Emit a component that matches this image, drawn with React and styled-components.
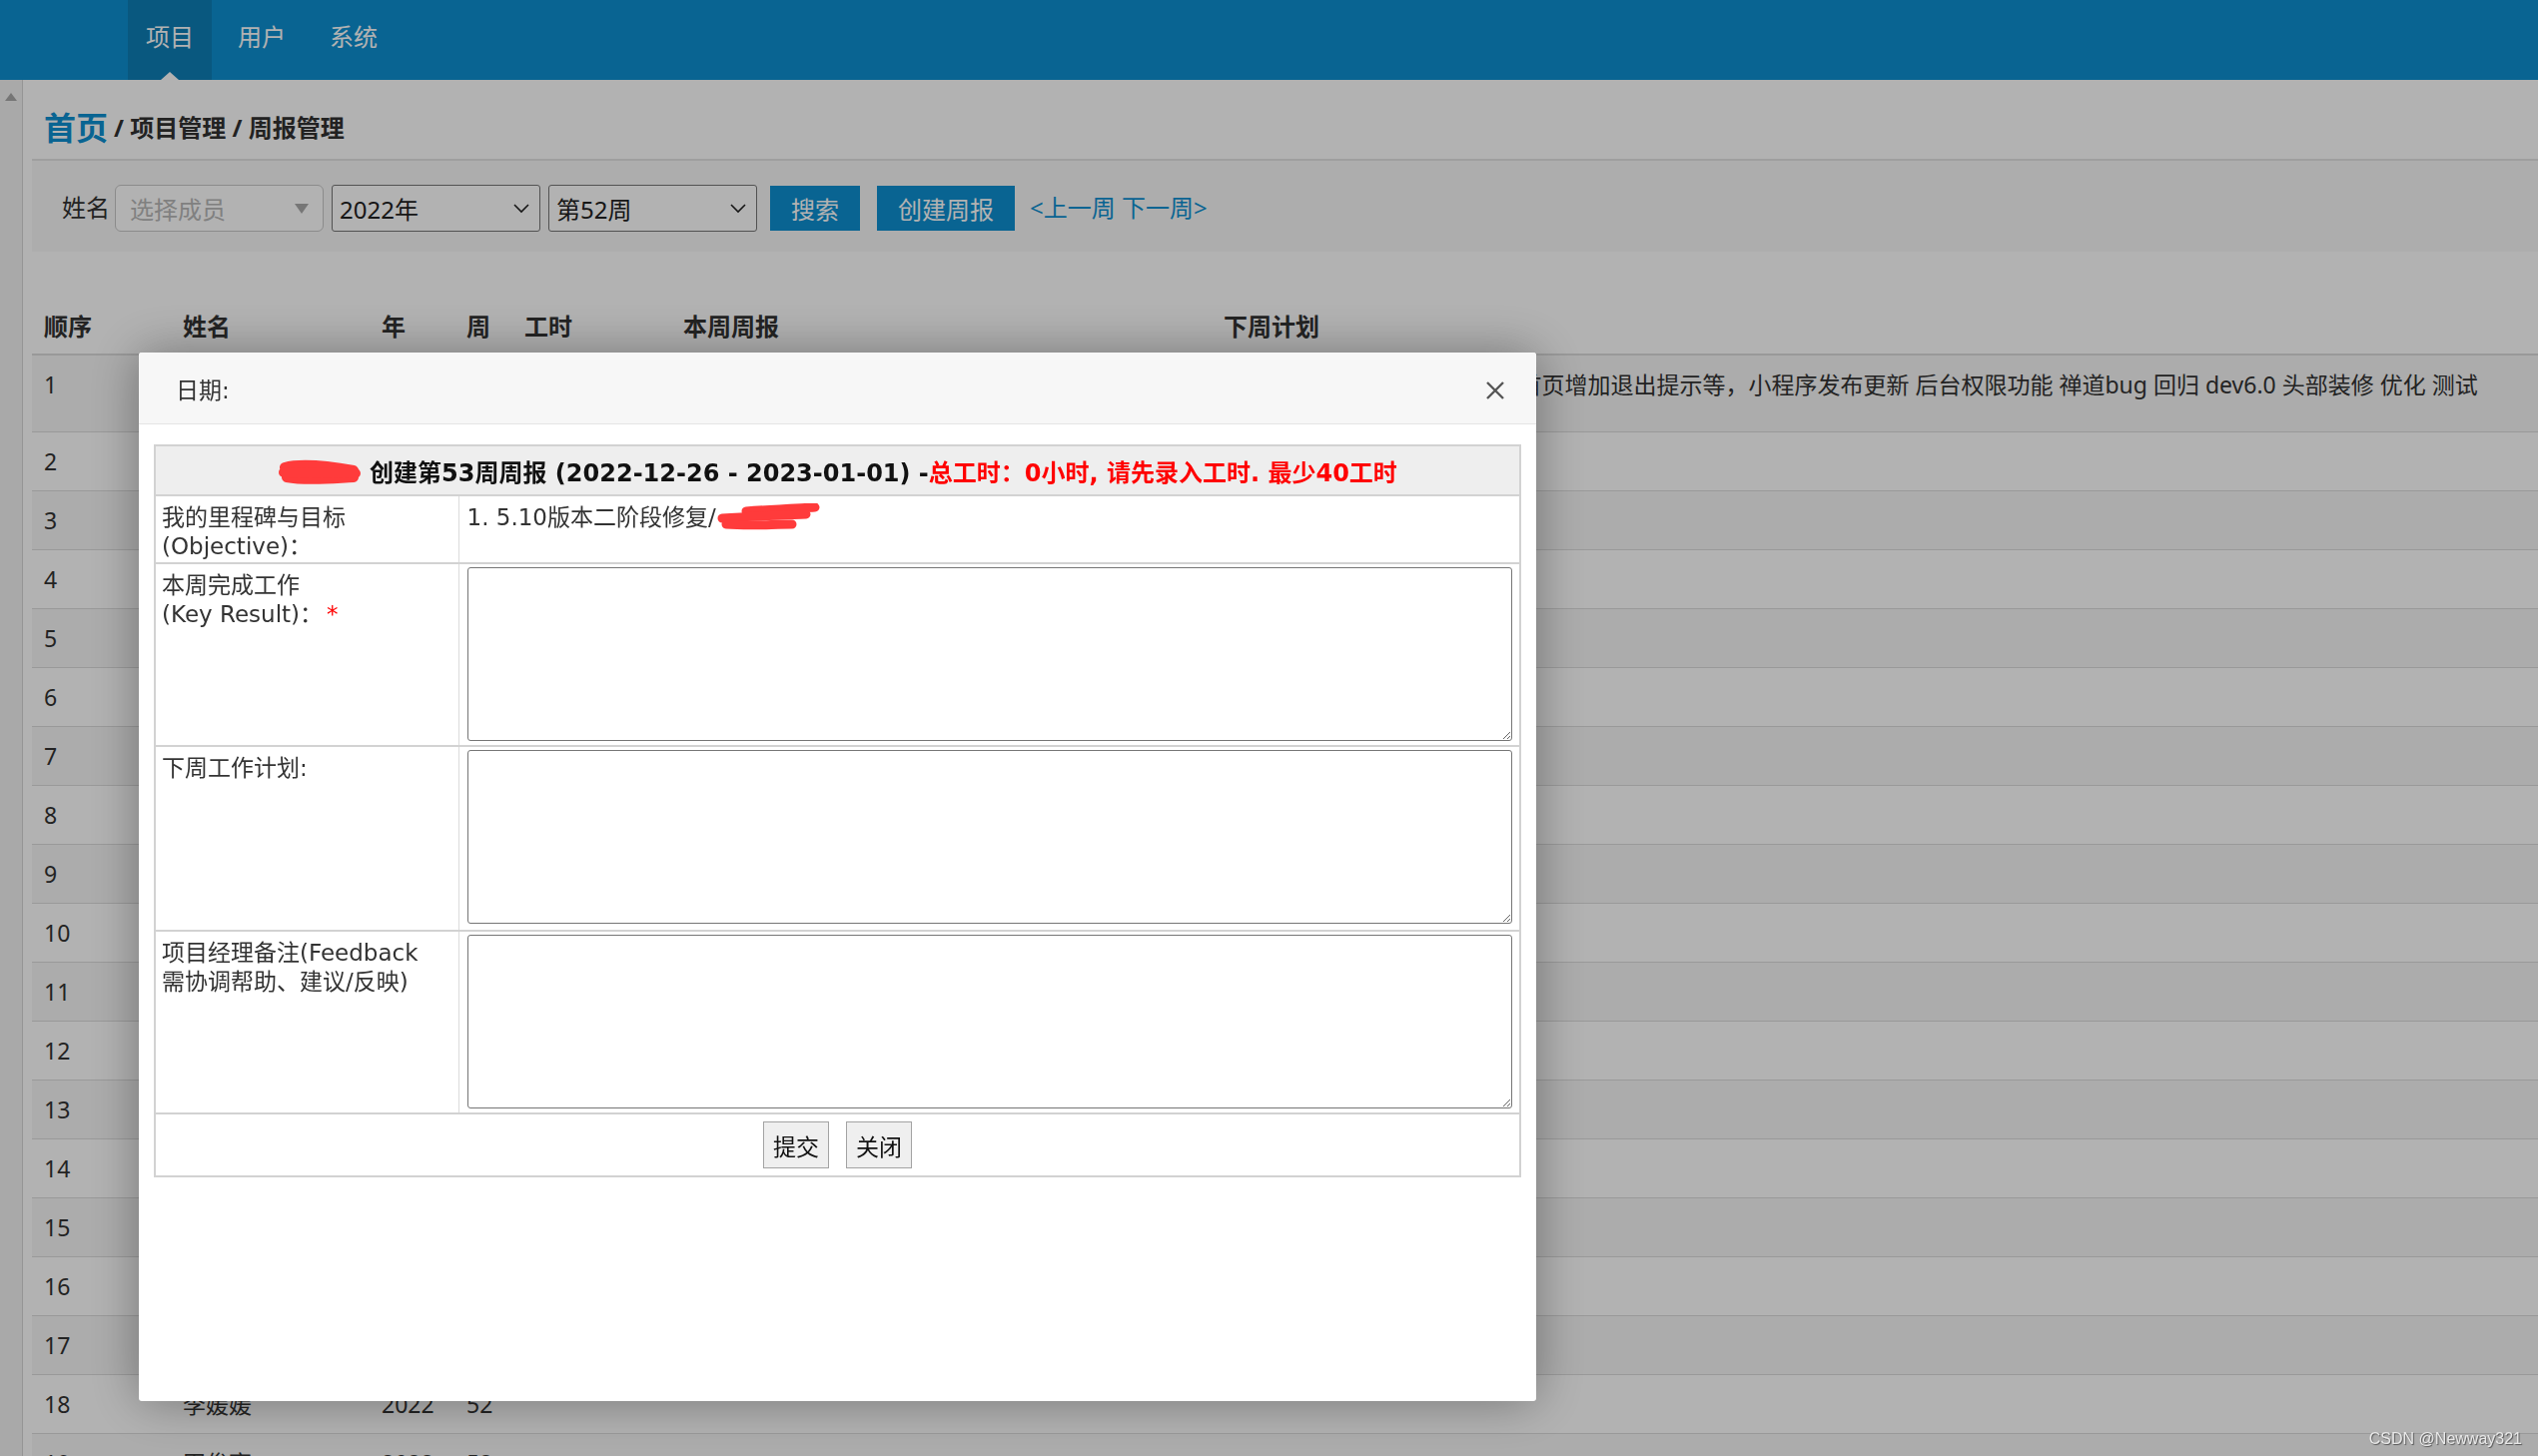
import React from "react";
import styled, { createGlobalStyle } from "styled-components";

const GlobalStyle = createGlobalStyle`
  html, body { margin: 0; padding: 0; height: 100%; }
  body {
    font-family: "Noto Sans", "Noto Sans CJK SC", sans-serif;
    color: #333;
    background: #fff;
    overflow: hidden;
  }
  * { box-sizing: border-box; }
`;

const Page = styled.div`
  height: 100vh;
  display: flex;
  flex-direction: column;
  overflow: hidden;
`;

const TopBar = styled.header`
  height: 80px;
  flex: none;
  background: #0e90d2;
  display: flex;
  align-items: stretch;
  gap: 8px;
  padding-left: 128px;
`;

const NavItem = styled.a`
  position: relative;
  display: flex;
  align-items: center;
  padding: 0 18px 9px;
  font-size: 24px;
  color: #fff;
  background: ${(p) => (p.$active ? "#0e7eb7" : "transparent")};
  &::after {
    content: "";
    display: ${(p) => (p.$active ? "block" : "none")};
    position: absolute;
    left: 50%;
    bottom: 0;
    transform: translateX(-50%);
    border-left: 9px solid transparent;
    border-right: 9px solid transparent;
    border-bottom: 8px solid #fff;
  }
`;

const Body = styled.div`
  flex: 1;
  display: flex;
  min-height: 0;
`;

const Rail = styled.div`
  width: 23px;
  flex: none;
  background: #f3f3f3;
  border-right: 1px solid #d6d6d6;
  display: flex;
  justify-content: center;
  padding-top: 13px;
`;

const RailArrow = styled.span`
  width: 0;
  height: 0;
  border-left: 6px solid transparent;
  border-right: 6px solid transparent;
  border-bottom: 8px solid #a8a8a8;
`;

const Main = styled.main`
  flex: 1;
  min-width: 0;
  padding-left: 9px;
`;

const Breadcrumb = styled.div`
  height: 79px;
  padding: 13px 12px 0;
  display: flex;
  align-items: center;
  gap: 7px;
  font-weight: 700;
  font-size: 24px;
  color: #313131;
`;

const HomeLink = styled.a`
  font-size: 32px;
  color: #0e90d2;
  margin-right: -1px;
`;

const SearchPanel = styled.div`
  height: 93px;
  background: #f8f8f8;
  border-top: 2px solid #e4e4e4;
  display: flex;
  align-items: center;
  gap: 8px;
  padding: 4px 0 0 30px;
  font-size: 24px;
`;

const FieldLabel = styled.span`
  color: #333;
  margin-right: -3px;
  margin-top: -5px;
`;

const SelectBox = styled.div`
  width: 209px;
  height: 47px;
  display: flex;
  align-items: center;
  justify-content: space-between;
  padding: 0 10px 0 ${(p) => (p.$placeholder ? "14px" : "7px")};
  background: #fff;
  border: 1px solid ${(p) => (p.$placeholder ? "#c8c8c8" : "#767676")};
  border-radius: ${(p) => (p.$placeholder ? "6px" : "3px")};
  color: ${(p) => (p.$placeholder ? "#b8b8b8" : "#222")};
`;

const Caret = styled.span`
  width: 0;
  height: 0;
  border-left: 7px solid transparent;
  border-right: 7px solid transparent;
  border-top: 10px solid #aaa;
  margin-right: 4px;
`;

const PrimaryButton = styled.button`
  height: 45px;
  padding: 0 21px;
  border: 0;
  background: #0e90d2;
  color: #fff;
  font: inherit;
  margin-left: ${(p) => p.$gap || 0}px;
`;

const WeekLink = styled.a`
  color: #0e90d2;
  margin-left: 7px;
  margin-top: -5px;
`;

const ListTable = styled.table`
  width: 100%;
  margin-top: 44px;
  border-collapse: collapse;
  table-layout: fixed;
  font-size: 23px;
  color: #333;
`;

const HeadCell = styled.th`
  height: 59px;
  padding: 0 12px;
  text-align: left;
  font-size: 24px;
  font-weight: 700;
  color: #333;
  border-bottom: 2px solid #dcdcdc;
  white-space: nowrap;
`;

const Row = styled.tr`
  background: ${(p) => (p.$odd ? "#f6f6f6" : "#fff")};
  border-bottom: 1px solid #dcdcdc;
`;

const Cell = styled.td`
  height: ${(p) => (p.$tall ? 77 : 59)}px;
  padding: 11px 12px 0;
  vertical-align: top;
  line-height: 36px;
  white-space: nowrap;
  overflow: hidden;
`;

const Overlay = styled.div`
  position: fixed;
  inset: 0;
  background: rgba(0, 0, 0, 0.3);
`;

const Modal = styled.div`
  position: fixed;
  left: 139px;
  top: 353px;
  width: 1399px;
  height: 1050px;
  background: #fff;
  border-radius: 3px;
  box-shadow: 0 0 50px rgba(0, 0, 0, 0.35);
  font-family: "DejaVu Sans", "Noto Sans CJK SC", sans-serif;
  font-size: 23px;
  color: #333;
  overflow: hidden;
`;

const ModalHeader = styled.div`
  height: 72px;
  background: #f7f7f7;
  border-bottom: 1px solid #e5e5e5;
  display: flex;
  align-items: center;
  justify-content: space-between;
  padding: 0 31px 0 37px;
`;

const CloseIcon = styled.svg`
  width: 20px;
  height: 20px;
  stroke: #555;
  stroke-width: 2.4;
  margin-top: 4px;
`;

const ModalBody = styled.div`
  padding: 20px 15px;
`;

const FormTable = styled.table`
  width: 100%;
  border-collapse: collapse;
  table-layout: fixed;
  border: 2px solid #d2d2d2;
`;

const TitleCell = styled.td`
  height: 50px;
  background: #eee;
  text-align: center;
  font-size: 24px;
  font-weight: 700;
  color: #111;
  border-bottom: 2px solid #d2d2d2;
  white-space: nowrap;
`;

const Warn = styled.span`
  color: #ff0000;
`;

const FormRow = styled.tr`
  border-bottom: 2px solid #d2d2d2;
`;

const LabelCell = styled.td`
  height: ${(p) => p.$h}px;
  padding: 7px 6px 0;
  vertical-align: top;
  line-height: 29px;
  border-right: 1px solid #dcdcdc;
`;

const ValueCell = styled.td`
  padding: ${(p) => (p.$text ? "7px 7px 0" : "3px 7px 4px")} 8px;
  vertical-align: top;
  line-height: 29px;
`;

const Required = styled.span`
  color: #ff0000;
  margin-left: 4px;
`;

const TextArea = styled.textarea`
  display: block;
  width: 100%;
  height: 174px;
  border: 1px solid #767676;
  border-radius: 3px;
  resize: vertical;
  font: inherit;
`;

const ActionCell = styled.td`
  height: 63px;
  text-align: center;
`;

const ActionBar = styled.div`
  display: flex;
  justify-content: center;
  gap: 17px;
`;

const PlainButton = styled.button`
  height: 47px;
  padding: 0 9px;
  background: #efefef;
  border: 1px solid #a3a3a3;
  font: inherit;
  color: #111;
`;

const Scribble = styled.svg`
  vertical-align: middle;
  margin: ${(p) => p.$m || "0"};
`;

const Watermark = styled.div`
  position: fixed;
  right: 16px;
  bottom: 8px;
  font-family: "Liberation Sans", Arial, sans-serif;
  font-size: 16px;
  color: #e8e8e8;
  text-shadow: 1px 1px 1px #555;
`;

const rows = [
  { n: 1, name: "王小明", plan: "小程序端修复bug，个人中心首页增加退出提示等，小程序发布更新 后台权限功能 禅道bug 回归 dev6.0 头部装修 优化 测试" },
  ...Array.from({ length: 16 }, (_, i) => ({ n: i + 2, name: "", plan: "" })),
  { n: 18, name: "李媛媛", plan: "" },
  { n: 19, name: "田俊亮", plan: "" },
];

function RedMark({ variant }) {
  return variant === "title" ? (
    <Scribble $m="-4px 8px 0 0" width={84} height={26} viewBox="0 0 84 26">
      <g stroke="#ff3b3b" strokeWidth="10" strokeLinecap="round" fill="none">
        <path d="M7 8 C22 4 48 6 76 11" />
        <path d="M9 18 C30 22 56 19 76 18" />
        <path d="M6 13 L78 14" />
      </g>
    </Scribble>
  ) : (
    <Scribble $m="-4px 0 0 0" width={104} height={28} viewBox="0 0 104 28">
      <g stroke="#ff3b3b" strokeWidth="9" strokeLinecap="round" fill="none">
        <path d="M30 8 C55 6 80 5 99 4" />
        <path d="M6 15 C35 13 65 12 90 11" />
        <path d="M10 21 C35 23 55 21 76 21" />
      </g>
    </Scribble>
  );
}

export default function App() {
  return (
    <>
      <GlobalStyle />
      <Page>
        <TopBar>
          <NavItem $active>项目</NavItem>
          <NavItem>用户</NavItem>
          <NavItem>系统</NavItem>
        </TopBar>
        <Body>
          <Rail>
            <RailArrow />
          </Rail>
          <Main>
            <Breadcrumb>
              <HomeLink>首页</HomeLink>
              <span>/ 项目管理 / 周报管理</span>
            </Breadcrumb>
            <SearchPanel>
              <FieldLabel>姓名</FieldLabel>
              <SelectBox $placeholder>
                选择成员
                <Caret />
              </SelectBox>
              <SelectBox>
                2022年
                <svg width="16" height="10" viewBox="0 0 16 10" fill="none" stroke="#222" strokeWidth="1.6">
                  <path d="M1 1 L8 8 L15 1" />
                </svg>
              </SelectBox>
              <SelectBox>
                第52周
                <svg width="16" height="10" viewBox="0 0 16 10" fill="none" stroke="#222" strokeWidth="1.6">
                  <path d="M1 1 L8 8 L15 1" />
                </svg>
              </SelectBox>
              <PrimaryButton $gap={5}>搜索</PrimaryButton>
              <PrimaryButton $gap={9}>创建周报</PrimaryButton>
              <WeekLink>&lt;上一周 下一周&gt;</WeekLink>
            </SearchPanel>
            <ListTable>
              <colgroup>
                <col style={{ width: 139 }} />
                <col style={{ width: 199 }} />
                <col style={{ width: 85 }} />
                <col style={{ width: 58 }} />
                <col style={{ width: 159 }} />
                <col style={{ width: 541 }} />
                <col />
              </colgroup>
              <thead>
                <tr>
                  <HeadCell>顺序</HeadCell>
                  <HeadCell>姓名</HeadCell>
                  <HeadCell>年</HeadCell>
                  <HeadCell>周</HeadCell>
                  <HeadCell>工时</HeadCell>
                  <HeadCell>本周周报</HeadCell>
                  <HeadCell>下周计划</HeadCell>
                </tr>
              </thead>
              <tbody>
                {rows.map((r) => (
                  <Row key={r.n} $odd={r.n % 2 === 1}>
                    <Cell $tall={r.n === 1}>{r.n}</Cell>
                    <Cell $tall={r.n === 1}>{r.name}</Cell>
                    <Cell $tall={r.n === 1}>{r.name ? 2022 : ""}</Cell>
                    <Cell $tall={r.n === 1}>{r.name ? 52 : ""}</Cell>
                    <Cell $tall={r.n === 1}></Cell>
                    <Cell $tall={r.n === 1}></Cell>
                    <Cell $tall={r.n === 1}>{r.plan}</Cell>
                  </Row>
                ))}
              </tbody>
            </ListTable>
          </Main>
        </Body>
      </Page>

      <Overlay />
      <Modal>
        <ModalHeader>
          <span>日期:</span>
          <CloseIcon viewBox="0 0 20 20" fill="none">
            <path d="M2 2 L18 18 M18 2 L2 18" />
          </CloseIcon>
        </ModalHeader>
        <ModalBody>
          <FormTable>
            <colgroup>
              <col style={{ width: 304 }} />
              <col />
            </colgroup>
            <tbody>
              <tr>
                <TitleCell colSpan={2}>
                  <RedMark variant="title" />
                  创建第53周周报 (2022-12-26 - 2023-01-01) -
                  <Warn>总工时：0小时, 请先录入工时. 最少40工时</Warn>
                </TitleCell>
              </tr>
              <FormRow>
                <LabelCell $h={68}>
                  我的里程碑与目标
                  <br />
                  (Objective)：
                </LabelCell>
                <ValueCell $text>
                  1. 5.10版本二阶段修复/
                  <RedMark />
                </ValueCell>
              </FormRow>
              <FormRow>
                <LabelCell $h={183}>
                  本周完成工作
                  <br />
                  (Key Result)：<Required>*</Required>
                </LabelCell>
                <ValueCell>
                  <TextArea />
                </ValueCell>
              </FormRow>
              <FormRow>
                <LabelCell $h={185}>下周工作计划:</LabelCell>
                <ValueCell>
                  <TextArea />
                </ValueCell>
              </FormRow>
              <FormRow>
                <LabelCell $h={183}>
                  项目经理备注(Feedback
                  <br />
                  需协调帮助、建议/反映)
                </LabelCell>
                <ValueCell>
                  <TextArea />
                </ValueCell>
              </FormRow>
              <tr>
                <ActionCell colSpan={2}>
                  <ActionBar>
                    <PlainButton>提交</PlainButton>
                    <PlainButton>关闭</PlainButton>
                  </ActionBar>
                </ActionCell>
              </tr>
            </tbody>
          </FormTable>
        </ModalBody>
      </Modal>
      <Watermark>CSDN @Newway321</Watermark>
    </>
  );
}
